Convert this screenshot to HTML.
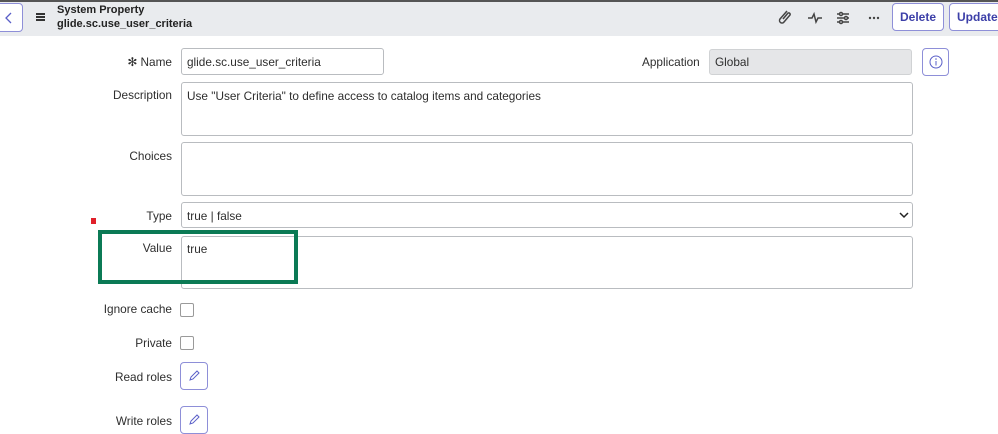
<!DOCTYPE html>
<html><head><style>
*{box-sizing:border-box}
body{margin:0;width:998px;height:432px;overflow:hidden;background:#fff;font-family:"Liberation Sans",sans-serif;font-size:11.8px;color:#2e2e2e;position:relative}
.a{position:absolute}
.hdr{left:0;top:0;width:998px;height:36px;background:#e9ebee;border-top:2px solid #555}
.btn{border:1px solid #8e8fd8;border-radius:4px;background:#fff;color:#3c3fa8;font-weight:bold;font-size:12px;display:flex;align-items:center;justify-content:center}
.lbl{text-align:right;width:172px;left:0}
.in{border:1px solid #b9bcc0;border-radius:3px;background:#fff;padding:6px 5px}
.cb{width:14px;height:14px;border:1px solid #9a9a9a;border-radius:2px}
</style></head><body>
<div class="a hdr"></div>
<div class="a btn" style="left:-6px;top:3px;width:29px;height:29px"><svg width="10" height="14"><path d="M7 2L2 7l5 5" stroke="#5a5fc8" fill="none" stroke-width="1.3"/></svg></div>
<div class="a" style="left:36px;top:13px;width:9px;height:8px;border-top:2px solid #333;border-bottom:2px solid #333"><div style="margin-top:1px;border-top:2px solid #333"></div></div>
<div class="a" style="left:57px;top:3px;font-weight:bold;font-size:11px;line-height:14px;color:#222">System Property<br>glide.sc.use_user_criteria</div>
<svg class="a" style="left:775px;top:8px" width="120" height="20" fill="none" stroke="#444" stroke-width="1.5">
<path d="M12 3L5 11a2.5 2.5 0 0 0 4 3l6-7a1.5 1.5 0 0 0-2-2l-5 6"/>
<path d="M33 10h4l2-4 2 8 2-4h4"/>
<path d="M62 6h12M62 10h12M62 14h12"/><circle cx="66" cy="6" r="1.5" fill="#e9ebee"/><circle cx="71" cy="10" r="1.5" fill="#e9ebee"/><circle cx="66" cy="14" r="1.5" fill="#e9ebee"/>
<circle cx="95" cy="10" r="1.2" fill="#444" stroke="none"/><circle cx="99" cy="10" r="1.2" fill="#444" stroke="none"/><circle cx="103" cy="10" r="1.2" fill="#444" stroke="none"/>
</svg>
<div class="a btn" style="left:892px;top:3px;width:52px;height:28px">Delete</div>
<div class="a btn" style="left:949px;top:3px;width:60px;height:28px;justify-content:flex-start;padding-left:7px">Update</div>

<div class="a lbl" style="top:55px">✻ Name</div>
<div class="a in" style="left:181px;top:48px;width:203px;height:27px">glide.sc.use_user_criteria</div>
<div class="a" style="left:642px;top:55px">Application</div>
<div class="a in" style="left:709px;top:49px;width:203px;height:26px;background:#e5e6e8;border-color:#d0d2d4;padding-top:5px">Global</div>
<div class="a btn" style="left:922px;top:48px;width:27px;height:28px"><svg width="14" height="14"><circle cx="7" cy="7" r="6" stroke="#5a5fc8" fill="none"/><path d="M7 6v4.5" stroke="#5a5fc8"/><circle cx="7" cy="4" r=".8" fill="#5a5fc8"/></svg></div>

<div class="a lbl" style="top:88px">Description</div>
<div class="a in" style="left:181px;top:82px;width:732px;height:54px">Use "User Criteria" to define access to catalog items and categories</div>
<div class="a lbl" style="top:149px">Choices</div>
<div class="a in" style="left:181px;top:142px;width:732px;height:54px"></div>
<div class="a lbl" style="top:209px">Type</div>
<div class="a in" style="left:181px;top:202px;width:732px;height:26px;padding-top:6px">true | false</div>
<svg class="a" style="left:899px;top:210px" width="10" height="10"><path d="M1 3l4 4 4-4" stroke="#222" fill="none" stroke-width="1.5"/></svg>
<div class="a" style="left:91px;top:218px;width:5px;height:6px;background:#e0202a"></div>
<div class="a lbl" style="top:241px">Value</div>
<div class="a in" style="left:181px;top:236px;width:732px;height:53px;padding-top:5px">true</div>
<div class="a" style="left:98px;top:230px;width:200px;height:54px;border:4px solid #0b7a55"></div>

<div class="a lbl" style="top:302px">Ignore cache</div>
<div class="a cb" style="left:180px;top:303px"></div>
<div class="a lbl" style="top:336px">Private</div>
<div class="a cb" style="left:180px;top:336px"></div>
<div class="a lbl" style="top:370px">Read roles</div>
<div class="a btn" style="left:180px;top:362px;width:28px;height:28px"><svg width="14" height="14"><path d="M3 11l1-3 6-6 2 2-6 6z" stroke="#5a5fc8" fill="none"/></svg></div>
<div class="a lbl" style="top:414px">Write roles</div>
<div class="a btn" style="left:180px;top:406px;width:28px;height:28px"><svg width="14" height="14"><path d="M3 11l1-3 6-6 2 2-6 6z" stroke="#5a5fc8" fill="none"/></svg></div>
</body></html>
